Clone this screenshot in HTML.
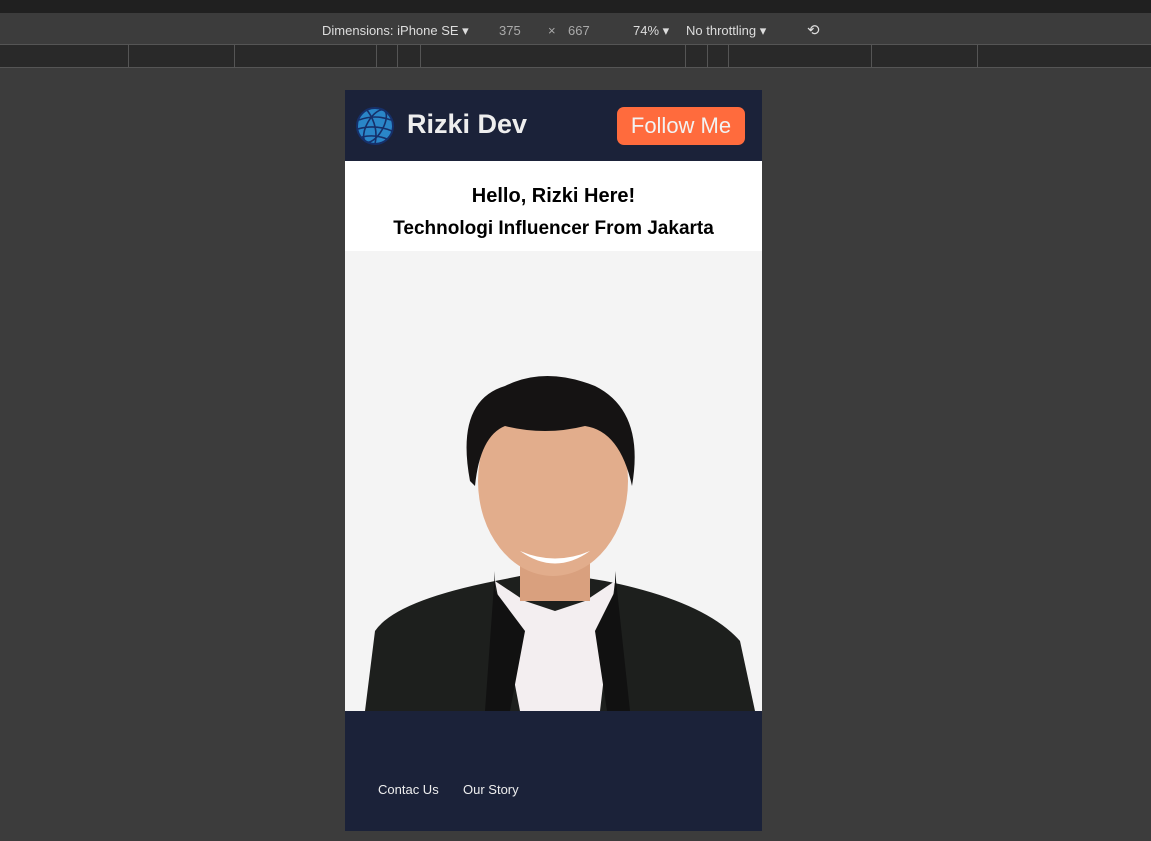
<!DOCTYPE html>
<html><head><style>
body{margin:0;width:1151px;height:841px;background:#3c3c3c;font-family:"Liberation Sans",sans-serif;position:relative;overflow:hidden}
.a{position:absolute}
</style></head><body>
<div class="a" style="left:0;top:0;width:1151px;height:13px;background:#202020"></div>
<div class="a" style="left:0;top:13px;width:1151px;height:31px;background:#3c3c3c;color:#ddd;font-size:13px">
<span class="a" style="left:322px;top:10px">Dimensions: iPhone SE ▾</span>
<span class="a" style="left:499px;top:10px;color:#aaa">375</span>
<span class="a" style="left:548px;top:10px;color:#aaa">×</span>
<span class="a" style="left:568px;top:10px;color:#aaa">667</span>
<span class="a" style="left:633px;top:10px">74% ▾</span>
<span class="a" style="left:686px;top:10px">No throttling ▾</span>
<span class="a" style="left:807px;top:8px;font-size:15px">⟲</span>
</div>
<div class="a" style="left:0;top:44px;width:1151px;height:22px;background:#292929;border-top:1px solid #555;border-bottom:1px solid #555"></div>
<div class="a" style="left:128px;top:45px;width:1px;height:22px;background:#555"></div>
<div class="a" style="left:234px;top:45px;width:1px;height:22px;background:#555"></div>
<div class="a" style="left:376px;top:45px;width:1px;height:22px;background:#555"></div>
<div class="a" style="left:397px;top:45px;width:1px;height:22px;background:#555"></div>
<div class="a" style="left:420px;top:45px;width:1px;height:22px;background:#555"></div>
<div class="a" style="left:685px;top:45px;width:1px;height:22px;background:#555"></div>
<div class="a" style="left:707px;top:45px;width:1px;height:22px;background:#555"></div>
<div class="a" style="left:728px;top:45px;width:1px;height:22px;background:#555"></div>
<div class="a" style="left:871px;top:45px;width:1px;height:22px;background:#555"></div>
<div class="a" style="left:977px;top:45px;width:1px;height:22px;background:#555"></div>

<div class="a" style="left:345px;top:90px;width:417px;height:71px;background:#1b2239"></div>
<svg class="a" style="left:355px;top:106px" width="40" height="40" viewBox="0 0 40 40"><circle cx="20" cy="20" r="18" fill="#2a86c8" stroke="#16306a" stroke-width="2"/><g fill="none" stroke="#16306a" stroke-width="1.6"><ellipse cx="20" cy="20" rx="8" ry="18" transform="rotate(30 20 20)"/><path d="M4 14Q20 8 36 14M3 23Q20 18 37 25M7 31Q20 28 32 33M12 4Q24 20 20 38"/></g></svg>
<div class="a" style="left:407px;top:109px;color:#eee;font-size:27px;font-weight:bold">Rizki Dev</div>
<div class="a" style="left:617px;top:107px;width:128px;height:38px;background:#ff6b3d;border-radius:7px;color:#f2f2f2;font-size:22px;line-height:38px;text-align:center">Follow Me</div>

<div class="a" style="left:345px;top:161px;width:417px;height:90px;background:#fff;text-align:center;font-weight:bold;color:#000">
<div style="margin-top:24px;font-size:20px">Hello, Rizki Here!</div>
<div style="margin-top:10px;font-size:19px">Technologi Influencer From Jakarta</div>
</div>
<div class="a" style="left:345px;top:251px;width:417px;height:460px;background:#f4f4f4;overflow:hidden">
<svg width="417" height="460" viewBox="0 0 417 460">
<path d="M20 460 L30 380 Q50 350 150 330 L200 320 L260 330 Q360 350 395 390 L410 460Z" fill="#1d1f1d"/>
<path d="M150 330 L175 460 L255 460 L270 330 L240 350 L210 360 L180 350Z" fill="#f3eef0"/>
<path d="M150 320 L150 340 L180 380 L165 460 L140 460 Z M270 320 L270 340 L250 380 L262 460 L285 460Z" fill="#111"/>
<rect x="175" y="270" width="70" height="80" fill="#d9a07e"/>
<ellipse cx="208" cy="230" rx="75" ry="95" fill="#e2ad8c"/>
<path d="M125 230 Q110 150 160 135 Q200 115 250 135 Q300 160 287 235 Q275 180 240 175 Q200 185 160 175 Q135 185 130 235Z" fill="#151313"/>
<path d="M175 300 Q210 315 245 300 Q210 325 175 300Z" fill="#fff"/>
</svg>
</div>
<div class="a" style="left:345px;top:711px;width:417px;height:120px;background:#1b2239"></div>
<div class="a" style="left:378px;top:782px;color:#eee;font-size:13px">Contac Us</div>
<div class="a" style="left:463px;top:782px;color:#eee;font-size:13px">Our Story</div>
</body></html>
